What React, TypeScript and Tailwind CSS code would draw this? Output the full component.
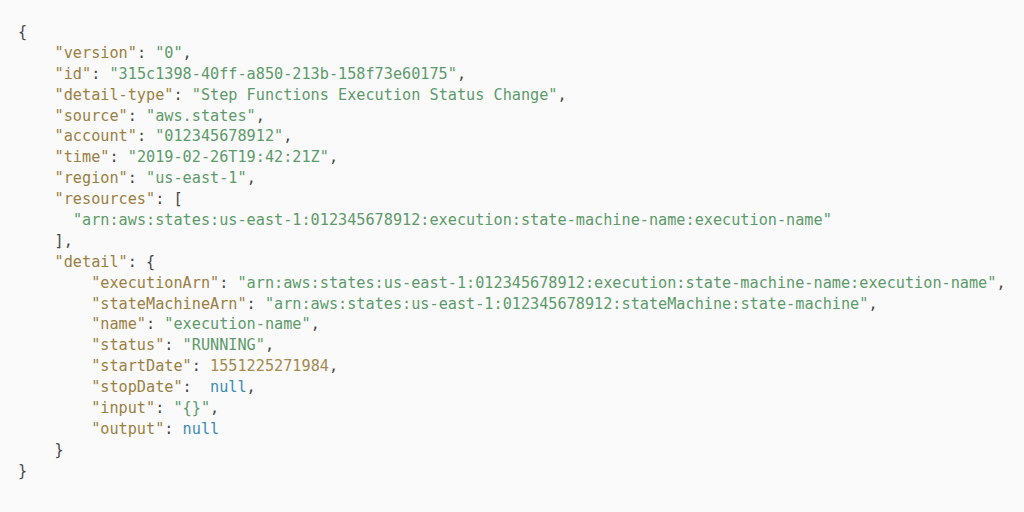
import React from "react";

type Tok = { t: string; c: "k" | "s" | "n" | "l" | "p" };

const K = (t: string): Tok => ({ t, c: "k" });
const S = (t: string): Tok => ({ t, c: "s" });
const N = (t: string): Tok => ({ t, c: "n" });
const L = (t: string): Tok => ({ t, c: "l" });
const P = (t: string): Tok => ({ t, c: "p" });

const cls: Record<Tok["c"], string> = {
  k: "text-[#9a7f43]",
  s: "text-[#5d9a6a]",
  n: "text-[#a38a4c]",
  l: "text-[#3a8cb4]",
  p: "text-[#474747]",
};

const lines: Tok[][] = [
  [P("{")],
  [P("    "), K('"version"'), P(": "), S('"0"'), P(",")],
  [P("    "), K('"id"'), P(": "), S('"315c1398-40ff-a850-213b-158f73e60175"'), P(",")],
  [P("    "), K('"detail-type"'), P(": "), S('"Step Functions Execution Status Change"'), P(",")],
  [P("    "), K('"source"'), P(": "), S('"aws.states"'), P(",")],
  [P("    "), K('"account"'), P(": "), S('"012345678912"'), P(",")],
  [P("    "), K('"time"'), P(": "), S('"2019-02-26T19:42:21Z"'), P(",")],
  [P("    "), K('"region"'), P(": "), S('"us-east-1"'), P(",")],
  [P("    "), K('"resources"'), P(": [")],
  [P("      "), S('"arn:aws:states:us-east-1:012345678912:execution:state-machine-name:execution-name"')],
  [P("    ],")],
  [P("    "), K('"detail"'), P(": {")],
  [P("        "), K('"executionArn"'), P(": "), S('"arn:aws:states:us-east-1:012345678912:execution:state-machine-name:execution-name"'), P(",")],
  [P("        "), K('"stateMachineArn"'), P(": "), S('"arn:aws:states:us-east-1:012345678912:stateMachine:state-machine"'), P(",")],
  [P("        "), K('"name"'), P(": "), S('"execution-name"'), P(",")],
  [P("        "), K('"status"'), P(": "), S('"RUNNING"'), P(",")],
  [P("        "), K('"startDate"'), P(": "), N("1551225271984"), P(",")],
  [P("        "), K('"stopDate"'), P(":  "), L("null"), P(",")],
  [P("        "), K('"input"'), P(": "), S('"{}"'), P(",")],
  [P("        "), K('"output"'), P(": "), L("null")],
  [P("    }")],
  [P("}")],
];

export default function App() {
  return (
    <div className="w-[1024px] h-[512px] bg-[#fafafa] overflow-hidden">
      <pre className="pl-[18px] pt-[22px] m-0 text-[15.2px] leading-[20.9px] font-['DejaVu_Sans_Mono',monospace]">
        {lines.map((ln, i) => (
          <div key={i} className="h-[20.9px] whitespace-pre">
            {ln.map((tk, j) => (
              <span key={j} className={cls[tk.c]}>
                {tk.t}
              </span>
            ))}
          </div>
        ))}
      </pre>
    </div>
  );
}
